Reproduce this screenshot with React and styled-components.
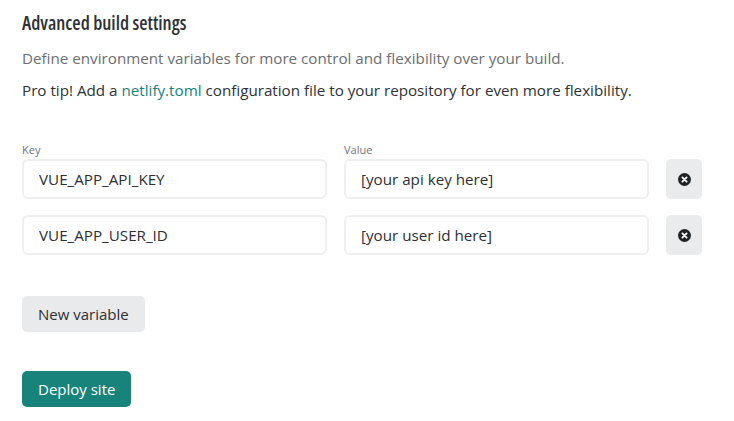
import React from "react";
import styled, { createGlobalStyle } from "styled-components";

const Global = createGlobalStyle`
  body {
    margin: 0;
    background: #fff;
    font-family: "Open Sans", "Noto Sans", sans-serif;
    color: #2d3033;
  }
`;

const Page = styled.div`
  padding: 9px 22px 0 22px;
`;

const Title = styled.h2`
  margin: 0;
  font-size: 19px;
  font-weight: 600;
  font-stretch: 87.5%;
  line-height: 28px;
  color: #2e3236;
`;

const Text = styled.p`
  margin: ${(p) => p.$mt || 0}px 0 0 0;
  font-size: 15.2px;
  line-height: 24px;
  color: ${(p) => (p.$muted ? "#6b6e72" : "#2e3236")};
`;

const Link = styled.a`
  color: #17837b;
  text-decoration: none;
`;

const Rows = styled.div`
  margin-top: 40px;
  display: flex;
  flex-direction: column;
  gap: 16px;
`;

const Row = styled.div`
  display: flex;
  align-items: flex-end;
  gap: 17px;
`;

const Field = styled.label`
  display: flex;
  flex-direction: column;
  width: 305px;
`;

const Label = styled.span`
  font-size: 11px;
  line-height: 16px;
  color: #707377;
  margin-bottom: 1px;
`;

const Input = styled.input`
  box-sizing: border-box;
  height: 40px;
  width: 100%;
  padding: 0 15px;
  border: 2px solid #eeeff0;
  border-radius: 6px;
  font-family: inherit;
  font-size: 15.2px;
  color: #2d3033;
  background: #fff;
  outline: none;
`;

const IconButton = styled.button`
  width: 36px;
  height: 40px;
  border: none;
  border-radius: 5px;
  background: #eaebec;
  display: flex;
  align-items: center;
  justify-content: center;
  padding: 0;
  cursor: pointer;
`;

const Button = styled.button`
  height: 36px;
  padding: 0 16px;
  border: none;
  border-radius: 5px;
  font-family: inherit;
  font-size: 15px;
  cursor: pointer;
  background: ${(p) => (p.$primary ? "#17837b" : "#e9eaeb")};
  color: ${(p) => (p.$primary ? "#fff" : "#2d3033")};
  margin-top: ${(p) => p.$mt}px;
`;

const Actions = styled.div`
  display: flex;
  flex-direction: column;
  align-items: flex-start;
`;

const RemoveIcon = () => (
  <svg width="13" height="13" viewBox="0 0 16 16">
    <circle cx="8" cy="8" r="8" fill="#202325" />
    <path d="M5.4 5.4 L10.6 10.6 M10.6 5.4 L5.4 10.6" stroke="#fff" strokeWidth="2.2" strokeLinecap="round" />
  </svg>
);

const vars = [
  { key: "VUE_APP_API_KEY", value: "[your api key here]" },
  { key: "VUE_APP_USER_ID", value: "[your user id here]" },
];

const App = () => (
  <Page>
    <Global />
    <Title>Advanced build settings</Title>
    <Text $muted $mt={9}>
      Define environment variables for more control and flexibility over your build.
    </Text>
    <Text $mt={8}>
      Pro tip! Add a <Link href="#">netlify.toml</Link> configuration file to your repository for even more flexibility.
    </Text>
    <Rows>
      {vars.map((v, i) => (
        <Row key={v.key}>
          <Field>
            {i === 0 && <Label>Key</Label>}
            <Input defaultValue={v.key} />
          </Field>
          <Field>
            {i === 0 && <Label>Value</Label>}
            <Input defaultValue={v.value} />
          </Field>
          <IconButton aria-label="Remove">
            <RemoveIcon />
          </IconButton>
        </Row>
      ))}
    </Rows>
    <Actions>
      <Button $mt={41}>New variable</Button>
      <Button $primary $mt={39}>Deploy site</Button>
    </Actions>
  </Page>
);

export default App;
